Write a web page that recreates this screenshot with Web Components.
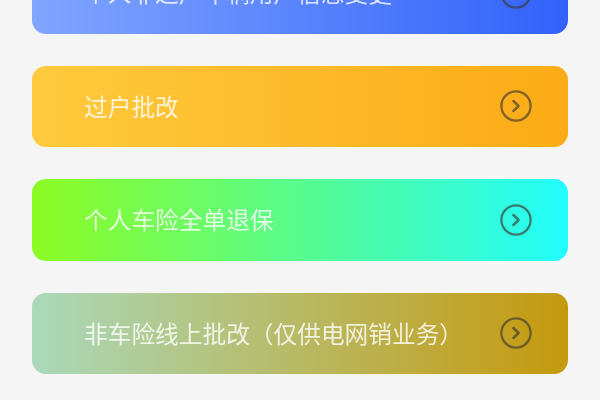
<!DOCTYPE html>
<html lang="zh">
<head>
<meta charset="utf-8">
<title>批改</title>
<style>
html,body{margin:0;height:100%;}
body{width:600px;height:400px;overflow:hidden;background:#f5f5f6;font-family:"Noto Sans CJK SC","Noto Sans",sans-serif;}
</style>
</head>
<body>
<action-list>
  <action-card c1="#80a6ff" c2="#3261fa">个人非过户车辆用户信息变更</action-card>
  <action-card c1="#ffca3e" c2="#fbab15">过户批改</action-card>
  <action-card c1="#8dfb22" c2="#22fdfd">个人车险全单退保</action-card>
  <action-card c1="#aad9bb" c2="#c6990c">非车险线上批改（仅供电网销业务）</action-card>
</action-list>
<template id="list-t">
  <style>
    :host{display:flex;flex-direction:column;gap:32px;padding:0 32px;margin-top:-47.7px;filter:blur(.5px);}
  </style>
  <slot></slot>
</template>
<template id="card-t">
  <style>
    :host{display:flex;align-items:center;justify-content:space-between;box-sizing:border-box;height:81.5px;padding:0 36.5px 0 52px;border-radius:14px;color:rgba(255,255,255,.8);font-size:23.7px;line-height:1;background:linear-gradient(90deg,var(--c1),var(--c2));}
    svg{display:block;width:32px;height:32px;flex:none;margin-top:-1px;}
    circle,path{fill:none;stroke:#3f3a30;stroke-opacity:.66;stroke-width:2.3;}
    path{stroke-linecap:round;stroke-linejoin:round;stroke-width:2.5;}
  </style>
  <span><slot></slot></span>
  <svg viewBox="0 0 32 32" aria-hidden="true"><circle cx="16" cy="16" r="14.6"/><path d="M13.4 11 18.6 16 13.4 21"/></svg>
</template>
<script>
class ActionList extends HTMLElement{
  constructor(){super();this.attachShadow({mode:'open'}).appendChild(document.getElementById('list-t').content.cloneNode(true));}
}
class ActionCard extends HTMLElement{
  constructor(){super();this.attachShadow({mode:'open'}).appendChild(document.getElementById('card-t').content.cloneNode(true));}
  connectedCallback(){
    this.style.setProperty('--c1',this.getAttribute('c1'));
    this.style.setProperty('--c2',this.getAttribute('c2'));
  }
}
customElements.define('action-list',ActionList);
customElements.define('action-card',ActionCard);
</script>
</body>
</html>
